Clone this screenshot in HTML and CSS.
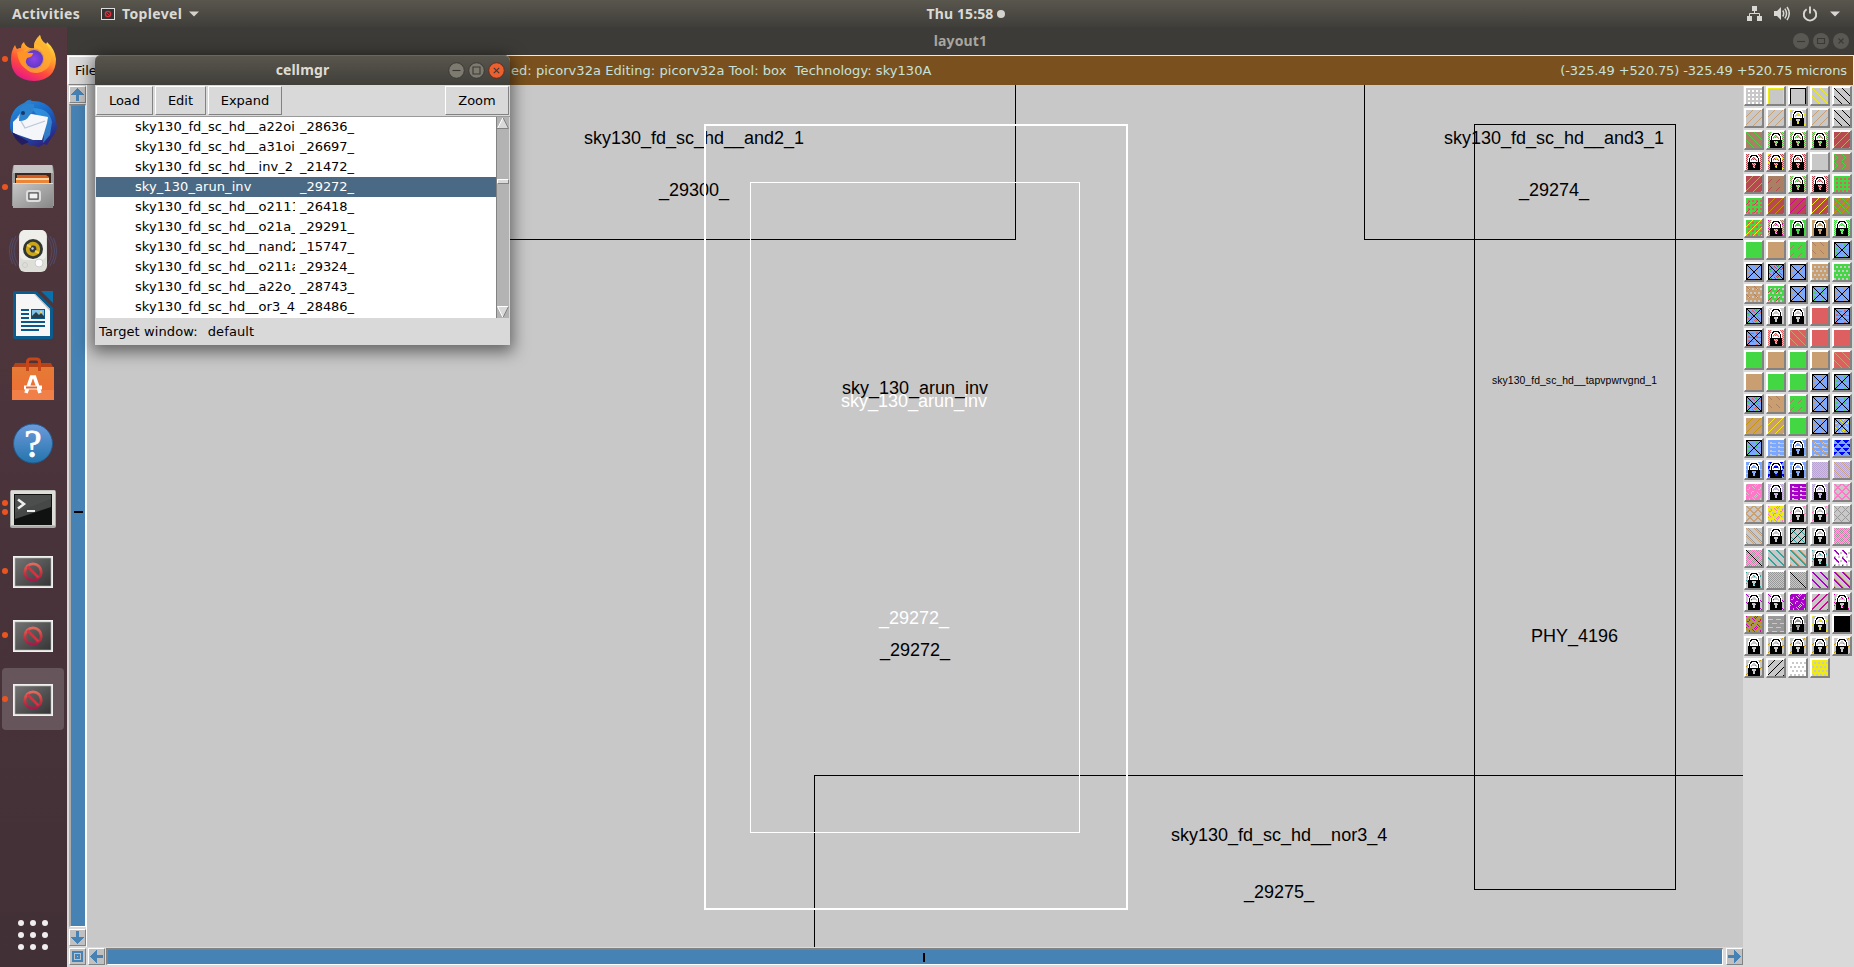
FILE: index.html
```html
<!DOCTYPE html>
<html lang="en">
<head>
<meta charset="utf-8">
<title>layout1</title>
<link rel="stylesheet" href="styles.css">
</head>
<body>
<header class="topbar">
  <div class="topbar-left">
    <span class="activities">Activities</span>
    <svg class="app-icon" width="14" height="12" viewBox="0 0 14 12"><rect x=".5" y=".5" width="13" height="11" fill="#333" stroke="#ddd"/><circle cx="7" cy="6" r="2.6" fill="none" stroke="#d8323c" stroke-width="1.4"/><path d="M5.3 4.3l3.4 3.4" stroke="#d8323c"/></svg>
    <span class="app-name">Toplevel</span>
    <svg class="caret" width="10" height="6" viewBox="0 0 10 6"><path d="M0 .5h10L5 5.5z" fill="#d3d2cd"/></svg>
  </div>
  <div class="clock">Thu 15:58<i class="dot"></i></div>
  <div class="tray">
    <svg width="15" height="15" viewBox="0 0 15 15" fill="#d8d7d3"><path d="M5 0h5v5H5zM0 10h5v5H0zM10 10h5v5h-5z"/><path d="M7.5 5v2.500M2.500 10V7.500h10V10" fill="none" stroke="#d8d7d3"/></svg>
    <svg width="16" height="15" viewBox="0 0 16 15"><path d="M0 5h3l4-4v13l-4-4H0z" fill="#d8d7d3"/><path d="M8.700 4.500q2 3 0 6M10.800 2.600q3.500 4.900 0 9.800M13 1q4.500 6.500 0 13" fill="none" stroke="#d8d7d3" stroke-width="1.500"/></svg>
    <svg width="16" height="16" viewBox="0 0 16 16"><path d="M4.600 3.200a6.200 6.200 0 1 0 6.800 0M8 .5v7" fill="none" stroke="#d8d7d3" stroke-width="1.900"/></svg>
    <svg width="10" height="6" viewBox="0 0 10 6"><path d="M0 .5h10L5 5.500z" fill="#d8d7d3"/></svg>
  </div>
</header>

<div class="desktop">
  <nav class="dock">
    <div class="launcher"><span class="pips"><i></i></span>
      <svg width="48" height="48" viewBox="0 0 48 48">
        <defs>
          <linearGradient id="ff1" x1=".8" y1="0" x2=".3" y2="1"><stop offset="0" stop-color="#fff14a"/><stop offset=".4" stop-color="#ffa22b"/><stop offset=".7" stop-color="#ff4a3d"/><stop offset="1" stop-color="#e8158a"/></linearGradient>
          <radialGradient id="ff2"><stop offset="0" stop-color="#8e45e8"/><stop offset="1" stop-color="#6038c8"/></radialGradient>
        </defs>
        <path d="M6 10q1 3 2 4 2-1 4-1 0-4 3-6 1 4 6 6l4 1Q24 6 31 0q1 6 6 9 1-1 1-2 8 7 9 17Q47 45 25 46 2 45 2 24 2 16 6 10z" fill="url(#ff1)"/>
        <circle cx="24.500" cy="24" r="10.500" fill="url(#ff2)"/>
        <path d="M24 13q9-1 12 6-2-8-11-10 3-6 6-9 1 6 6 9 6 7 5 17-2 10-14 12-14 0-14-14l7 2q2-1 3-3h-6q-3-3-8-3 2-5 14-7z" fill="#ffad30" opacity=".75"/>
        <circle cx="25" cy="24" r="9" fill="url(#ff2)"/>
        <path d="M8 17q6-3 11 1h5q0 4-6 5-4 7 3 12-11-2-13-18z" fill="#ff9328"/>
      </svg></div>
    <div class="launcher">
      <svg width="48" height="48" viewBox="0 0 48 48">
        <defs><linearGradient id="tb" x1="0" y1="0" x2=".6" y2="1"><stop offset="0" stop-color="#2f91d8"/><stop offset=".5" stop-color="#1968c8"/><stop offset="1" stop-color="#2b2580"/></linearGradient></defs>
        <path d="M15 4q4-4 8-3l-2 1q15-1 22 9 4 7 5 18l-3 7-2 2-5 8-3-1-5 3-9-2Q4 42 1 29 0 10 15 4z" fill="url(#tb)"/>
        <path d="M22 9q18-1 21 14l-2 13-7 8q4-19-12-35z" fill="#3ba0e4" opacity=".65"/>
        <path d="M4 23q5-4 8-10l27 5-1 6-5 17-9 0L4 34z" fill="#f4f6fa"/>
        <path d="M9 17l7 12 20-7" fill="none" stroke="#bec6d6" stroke-width="1.300"/>
        <path d="M3 33l9 5 8 5-7 3Q5 40 3 33z" fill="#251d62"/>
        <path d="M11 10q4-7 14-5 1 7-5 12-2 5-10 5z" fill="#2d83ce"/><circle cx="14" cy="14" r="2" fill="#123968"/>
      </svg></div>
    <div class="launcher"><span class="pips"><i></i></span>
      <svg width="48" height="48" viewBox="0 0 48 48">
        <defs><linearGradient id="fl" x1="0" y1="0" x2="1" y2="1"><stop offset="0" stop-color="#c6c6c6"/><stop offset="1" stop-color="#878787"/></linearGradient></defs>
        <path d="M4 3q0-1 2-1h36q2 0 2 1l1 7v33H3V10z" fill="#989898"/><path d="M5 2h38l1 8H4z" fill="#c4c4c4"/>
        <path d="M6 10h36v12H6z" fill="#3a2720"/><path d="M8 12h29l3 2v6H8z" fill="#d75c22"/><path d="M7 15h33v2H7z" fill="#f3d4a0"/><path d="M7 17h33v3H7z" fill="#ed8538"/>
        <path d="M4 20h40v25H4z" fill="url(#fl)"/><path d="M4 20h40v1H4z" fill="#ddd"/>
        <rect x="18" y="28" width="13" height="10" rx="2" fill="none" stroke="#ddd" stroke-width="2"/><rect x="20" y="30" width="9" height="6" fill="#f2f2f2" stroke="#454545"/>
      </svg></div>
    <div class="launcher">
      <svg width="48" height="48" viewBox="0 0 48 48">
        <g fill="none" stroke="#51567c" opacity=".7"><path d="M7 9q-9 15 0 30M3.500 11q-6 13 0 26M10 9q-10 15 0 30M41 9q9 15 0 30M44.500 11q6 13 0 26M38 9q10 15 0 30"/></g>
        <rect x="10" y="3" width="28" height="42" rx="6" fill="#deded9"/><rect x="11" y="3" width="26" height="30" rx="5" fill="#eeeeea"/>
        <circle cx="24" cy="22" r="10" fill="#323632"/><circle cx="24" cy="22" r="7.200" fill="#cca616"/><circle cx="24" cy="22" r="3.400" fill="#333842"/><circle cx="23.500" cy="21.500" r="1.200" fill="#c9d4dd"/><path d="M18 18l4 2M30 26l-4-2" stroke="#f1d14a" stroke-width="2"/>
        <circle cx="30" cy="36" r="4" fill="#fafafa" stroke="#ccc"/><circle cx="16" cy="38" r="2.500" fill="none" stroke="#ccc"/>
      </svg></div>
    <div class="launcher">
      <svg width="48" height="48" viewBox="0 0 48 48">
        <path d="M6 0h21l17 17v29q0 2-2 2H6q-2 0-2-2V2q0-2 2-2z" fill="#0a5c8e"/><path d="M32 0h12v12z" fill="#0870aa"/>
        <path d="M7 3h19l15 15v27H7z" fill="#f6f6f6"/>
        <path d="M26 3l15 15v2L25 3z" fill="#bbb"/>
        <g fill="#0b568a"><path d="M12 18h8v2h-8zM12 22h8v2h-8zM12 26h8v2h-8zM12 30h24v2H12zM12 34h24v2H12zM12 38h18v2H12z"/></g>
        <rect x="22.500" y="18.500" width="13" height="9" fill="#82c2e8" stroke="#0b568a"/><path d="M23 27v-2l4-4 3 3 2-2 3 3v2z" fill="#27404c"/><circle cx="32" cy="21" r="1.300" fill="#f5cb52"/>
      </svg></div>
    <div class="launcher">
      <svg width="48" height="48" viewBox="0 0 48 48">
        <defs><linearGradient id="sw" x1="0" y1="0" x2="0" y2="1"><stop offset="0" stop-color="#e57b36"/><stop offset="1" stop-color="#f06c34"/></linearGradient></defs>
        <path d="M6 8h36l3 6H3z" fill="#b54217"/><path d="M3 12h42v33H3z" fill="url(#sw)"/><path d="M3 35h42v10H3z" fill="#f18048"/>
        <path d="M18.500 16V7q0-3 3-3h6q3 0 3 3v9" fill="none" stroke="#c74618" stroke-width="3"/>
        <path d="M17 38l5.500-16h3L31 38" fill="none" stroke="#fff" stroke-width="3.600"/><path d="M15 32.500h18" stroke="#fff" stroke-width="4"/><path d="M17 32.500h11" stroke="#e7642d" stroke-width="2"/>
      </svg></div>
    <div class="launcher">
      <svg width="48" height="48" viewBox="0 0 48 48">
        <defs><linearGradient id="hp" x1="0" y1="0" x2="0" y2="1"><stop offset="0" stop-color="#6d9bdc"/><stop offset="1" stop-color="#2474ac"/></linearGradient></defs>
        <circle cx="24" cy="24.500" r="19.500" fill="url(#hp)" stroke="#235d91"/>
        <text class="help-mark" x="24" y="38" text-anchor="middle">?</text>
      </svg></div>
    <div class="launcher"><span class="pips"><i></i><i></i></span>
      <svg width="48" height="48" viewBox="0 0 48 48">
        <rect x="1" y="7" width="46" height="38" rx="2" fill="#a9a9a7"/><rect x="2" y="7.500" width="44" height="35" fill="#deded9"/><rect x="5" y="11" width="38" height="31" fill="#101211"/><path d="M6 12h36v12L6 36z" fill="#454847"/><path d="M6 12h36v4L6 30z" fill="#515453" opacity=".5"/>
        <path d="M9 16.500l6 4.500-6 4.500" fill="none" stroke="#eee" stroke-width="2.500"/><path d="M18 28h8" stroke="#eee" stroke-width="2"/>
      </svg></div>
    <div class="launcher"><span class="pips"><i></i></span><svg width="48" height="48" viewBox="0 0 48 48"><use href="#generic"/></svg></div>
    <div class="launcher"><span class="pips"><i></i></span><svg width="48" height="48" viewBox="0 0 48 48"><use href="#generic"/></svg></div>
    <div class="launcher active"><span class="pips"><i></i></span>
      <svg width="48" height="48" viewBox="0 0 48 48">
        <defs>
          <linearGradient id="gw" x1="0" y1="0" x2="1" y2="1"><stop offset="0" stop-color="#737373"/><stop offset="1" stop-color="#353535"/></linearGradient>
          <linearGradient id="gr" x1="0" y1="0" x2="0" y2="1"><stop offset="0" stop-color="#e6685d"/><stop offset=".6" stop-color="#c9303d"/><stop offset="1" stop-color="#a01c4b"/></linearGradient>
          <g id="generic"><rect x="4" y="9" width="40" height="32" fill="#f0f0ee"/><rect x="6" y="11" width="36" height="28" fill="url(#gw)" stroke="#aaa" stroke-width=".6"/><circle cx="24" cy="25" r="8.200" fill="none" stroke="url(#gr)" stroke-width="2.800"/><path d="M18.500 19.500l11 11" stroke="#cd3542" stroke-width="2.800"/></g>
        </defs>
        <use href="#generic"/>
      </svg></div>
    <div class="apps-button">
      <i></i><i></i><i></i><i></i><i></i><i></i><i></i><i></i><i></i>
    </div>
  </nav>

  <main class="window">
    <div class="titlebar">
      <span class="title">layout1</span>
      <div class="window-buttons dim">
        <svg width="16" height="16" viewBox="0 0 16 16"><circle cx="8" cy="8" r="8"/><path d="M4 8.500h8"/></svg>
        <svg width="16" height="16" viewBox="0 0 16 16"><circle cx="8" cy="8" r="8"/><path d="M4.500 5.500h7v5h-7z"/></svg>
        <svg width="16" height="16" viewBox="0 0 16 16"><circle cx="8" cy="8" r="8"/><path d="M5.500 5.500l5 5M10.500 5.500l-5 5"/></svg>
      </div>
    </div>
    <div class="menubar">
      <div class="menu">File</div>
      <div class="status-strip"><span class="status">ed: picorv32a Editing: picorv32a Tool: box&nbsp; Technology: sky130A</span><span class="coords">(-325.49 +520.75) -325.49 +520.75 microns</span></div>
    </div>
    <div class="work">
      <div class="vscroll">
        <div class="arrow"><svg width="15" height="15" viewBox="0 0 15 15"><path d="M7.500 1L14 8H9v6H6V8H1z"/></svg></div>
        <div class="vtrough"><i></i></div>
        <div class="arrow"><svg width="15" height="15" viewBox="0 0 15 15"><path d="M7.500 14L14 7H9V1H6v6H1z"/></svg></div>
      </div>
      <svg class="canvas" width="1656" height="862" viewBox="87 85 1656 862">
        <g class="cell-box">
          <path d="M500 239.500H1015.500V85"/>
          <path d="M1364.500 85V239.500H1743"/>
          <path d="M1743 775.500H814.500V947"/>
          <rect x="1474.500" y="124.500" width="201" height="765"/>
        </g>
        <g class="label">
          <text x="584" y="144" textLength="220">sky130_fd_sc_hd__and2_1</text>
          <text x="659" y="196">_29300_</text>
          <text x="1444" y="144" textLength="220">sky130_fd_sc_hd__and3_1</text>
          <text x="1519" y="196">_29274_</text>
          <text x="842" y="394">sky_130_arun_inv</text>
          <text x="880" y="656">_29272_</text>
          <text x="1531" y="642">PHY_4196</text>
          <text x="1171" y="841">sky130_fd_sc_hd__nor3_4</text>
          <text x="1244" y="898">_29275_</text>
          <text class="small" x="1492" y="384" textLength="165">sky130_fd_sc_hd__tapvpwrvgnd_1</text>
        </g>
        <g class="label selected">
          <text x="841" y="407">sky_130_arun_inv</text>
          <text x="879" y="624">_29272_</text>
        </g>
        <rect class="selection" x="750.500" y="182.500" width="329" height="650"/>
        <rect class="cursor-box" x="705" y="125" width="422" height="784"/>
      </svg>
      <div class="corner"><div class="arrow"><svg width="15" height="15" viewBox="0 0 15 15"><path fill-rule="evenodd" d="M2 2h11v11H2zM4 4v7h7V4zM5 5h5v5H5zM7 7v1h1V7z"/></svg></div></div>
      <div class="hscroll">
        <div class="arrow"><svg width="15" height="15" viewBox="0 0 15 15"><path d="M1 7.500L8 1v5h6v3H8v5z"/></svg></div>
        <div class="htrough"><i></i></div>
        <div class="arrow"><svg width="15" height="15" viewBox="0 0 15 15"><path d="M14 7.500L7 1v5H1v3h6v5z"/></svg></div>
      </div>
      <aside class="palette" id="palette"></aside>
    </div>
  </main>
</div>

<section class="cellmgr">
  <div class="cm-titlebar">
    <span class="title">cellmgr</span>
    <div class="window-buttons">
      <svg width="17" height="17" viewBox="0 0 17 17"><circle cx="8.500" cy="8.500" r="7.800"/><path d="M4.500 8.500h8"/></svg>
      <svg width="17" height="17" viewBox="0 0 17 17"><circle cx="8.500" cy="8.500" r="7.800"/><path d="M5 5h7v7H5z"/></svg>
      <svg class="close" width="17" height="17" viewBox="0 0 17 17"><circle cx="8.500" cy="8.500" r="7.800"/><path d="M5.800 5.800l5.400 5.400M11.200 5.800l-5.400 5.400"/></svg>
    </div>
  </div>
  <div class="cm-toolbar">
    <button class="load">Load</button><button class="edit">Edit</button><button class="expand">Expand</button><button class="zoom">Zoom</button>
  </div>
  <div class="cm-body">
    <ul class="tree">
      <li><span>sky130_fd_sc_hd__a22oi</span><b>_28636_</b></li>
      <li><span>sky130_fd_sc_hd__a31oi</span><b>_26697_</b></li>
      <li><span>sky130_fd_sc_hd__inv_2</span><b>_21472_</b></li>
      <li class="current"><span>sky_130_arun_inv</span><b>_29272_</b></li>
      <li><span>sky130_fd_sc_hd__o2111</span><b>_26418_</b></li>
      <li><span>sky130_fd_sc_hd__o21a_</span><b>_29291_</b></li>
      <li><span>sky130_fd_sc_hd__nand2</span><b>_15747_</b></li>
      <li><span>sky130_fd_sc_hd__o211a</span><b>_29324_</b></li>
      <li><span>sky130_fd_sc_hd__a22o_</span><b>_28743_</b></li>
      <li><span>sky130_fd_sc_hd__or3_4</span><b>_28486_</b></li>
    </ul>
    <div class="cm-scroll">
      <svg width="12" height="12" viewBox="0 0 12 12"><path d="M6 .5L11.500 11.500H.5z" fill="#d9d9d9"/><path d="M.5 11.500L6 .5" stroke="#fff"/><path d="M6 .5l5.500 11H0" fill="none" stroke="#828282"/></svg>
      <i class="thumb"></i>
      <svg width="12" height="12" viewBox="0 0 12 12"><path d="M6 11.500L11.500.5H.5z" fill="#d9d9d9"/><path d="M11.500.5H.5l5.500 11" fill="none" stroke="#fff"/><path d="M6 11.500l5.500-11" stroke="#828282"/></svg>
    </div>
  </div>
  <div class="cm-status"><span>Target window:</span><span>default</span></div>
</section>
<script src="palette.js"></script>
</body>
</html>
```
FILE: styles.css
```css
* { box-sizing: border-box; }
body {
  margin: 0;
  width: 1854px;
  height: 967px;
  overflow: hidden;
  display: flex;
  flex-direction: column;
  background: #3c3b37;
  font: 13px "DejaVu Sans", sans-serif;
  color: #000;
}
svg { display: block; flex: none; }

/* top panel */
.topbar {
  height: 27px;
  flex: none;
  display: grid;
  grid-template-columns: 1fr auto 1fr;
  align-items: center;
  background: linear-gradient(#59564d, #3f3e3a);
  font: bold 14px/26px "Noto Sans", sans-serif;
  color: #dad9d4;
}
.topbar-left { display: flex; align-items: center; padding-left: 12px; }
.activities { width: 89px; letter-spacing: .3px; }
.app-name { margin-left: 7px; width: 62px; letter-spacing: .35px; }
.caret { margin-left: 5px; }
.clock { display: flex; align-items: center; padding-left: 78px; letter-spacing: .1px; }
.dot { width: 8px; height: 8px; margin-left: 4px; border-radius: 50%; background: #d3d2cd; }
.tray { display: flex; align-items: center; justify-content: flex-end; gap: 13px; padding-right: 15px; }
.tray svg:last-child { margin-right: 0; }
.tray { padding-right: 14px; gap: 12px; }

.desktop { flex: 1; display: flex; min-height: 0; }

/* dock */
.dock {
  width: 67px;
  flex: none;
  display: flex;
  flex-direction: column;
  gap: 2px;
  padding: 1px 3px 17px 2px;
  background: linear-gradient(#52373e, #423037);
}
.launcher {
  position: relative;
  height: 62px;
  display: grid;
  place-items: center;
}
.launcher.active { background: #66565c; border-radius: 4px; }
.pips {
  position: absolute;
  left: 0;
  top: 0;
  height: 62px;
  display: flex;
  flex-direction: column;
  justify-content: center;
  gap: 3px;
}
.pips i { width: 6px; height: 6px; border-radius: 50%; background: #e95420; }
.help-mark { font: 39px "Liberation Serif", serif; fill: #fff; stroke: #fff; stroke-width: .8px; }
.apps-button {
  margin: auto auto 0;
  display: grid;
  grid-template-columns: repeat(3, 6px);
  gap: 6px;
}
.apps-button i { height: 6px; border-radius: 50%; background: #efeded; }

/* layout window */
.window { flex: 1; display: flex; flex-direction: column; min-width: 0; background: #d9d9d9; }
.titlebar {
  height: 28px;
  flex: none;
  display: flex;
  align-items: center;
  justify-content: center;
  position: relative;
  background: #3c3b37;
  color: #a9a69e;
}
.title { font: bold 14px/28px "Noto Sans", sans-serif; letter-spacing: .15px; }
.window-buttons { position: absolute; right: 5px; display: flex; gap: 4px; }
.window-buttons circle { fill: #7d7a70; stroke: #3a3935; stroke-width: 1; }
.window-buttons path { fill: none; stroke: #3a3935; stroke-width: 1.1; }
.window-buttons .close circle { fill: #ec5f2f; stroke: #682c17; }
.window-buttons.dim circle { fill: #5a5852; stroke: none; }
.menubar {
  height: 30px;
  flex: none;
  display: flex;
  padding: 1px 1px 0 1px;
  background: #ececec;
}
.menu {
  width: 40px;
  line-height: 27px;
  padding-left: 6px;
  background: #d9d9d9;
  border: 1px solid;
  border-color: #fff #828282 #828282 #fff;
}
.status-strip {
  flex: 1;
  display: flex;
  justify-content: space-between;
  padding: 0 6px 0 403px;
  line-height: 29px;
  background: #7a511e;
  color: #c5e2dd;
}
.status { letter-spacing: .055px; }
.coords { letter-spacing: -.11px; }
.work {
  flex: 1;
  display: grid;
  grid-template-columns: 20px 1656px 111px;
  grid-template-rows: 862px 20px;
}
.vscroll { grid-column: 1; grid-row: 1; }
.corner { grid-column: 1; grid-row: 2; }
.canvas { grid-column: 2; grid-row: 1; background: #c8c8c8; }
.hscroll { grid-column: 2; grid-row: 2; }
.cell-box { fill: none; stroke: #000; shape-rendering: crispEdges; }
.label { font: 18px "Liberation Sans", sans-serif; fill: #000; }
.label .small { font-size: 10.4px; }
.label.selected { fill: #fff; }
.selection { fill: none; stroke: #fff; shape-rendering: crispEdges; }
.cursor-box { fill: none; stroke: #fff; stroke-width: 2; shape-rendering: crispEdges; }

.arrow {
  width: 17px;
  height: 17px;
  flex: none;
  background: #c0c0c0;
  border: 1px solid;
  border-color: #fff #828282 #828282 #fff;
}
.arrow path { fill: #4682b4; shape-rendering: crispEdges; }
.vscroll {
  display: flex;
  flex-direction: column;
  align-items: flex-start;
  gap: 1px;
  padding: 1px 0 1px 2px;
  border-right: 1px solid #fff;
}
.vtrough, .htrough {
  display: grid;
  place-items: center;
  background: #4682b4;
  border: solid;
  border-width: 2px 1px 1px 2px;
  border-color: #828282 #fff #fff #828282;
}
.vtrough { flex: 1; width: 17px; margin-bottom: 1px; padding-bottom: 8px; border-left-color: #aaa; }
.vtrough i { width: 9px; height: 2px; background: #000; }
.corner { padding: 1px 0 0 2px; }
.hscroll { display: flex; gap: 1px; padding: 1px 0 0 1px; }
.htrough { flex: 1; height: 17px; margin-right: 2px; padding-left: 17px; }
.htrough i { width: 2px; height: 9px; background: #000; }

/* layer palette */
.palette {
  grid-column: 3;
  grid-row: 1 / 3;
  display: grid;
  grid-template-columns: repeat(5, 20px);
  grid-auto-rows: 20px;
  gap: 2px;
  padding: 1px;
  align-content: start;
  background: #d9d9d9;
}
.layer {
  border: solid;
  border-width: 1px 2px 2px 1px;
  border-color: #fff #828282 #828282 #fff;
  padding: 1px 0 0 1px;
  background: #fff;
}

/* floating cell manager */
.cellmgr {
  position: absolute;
  left: 95px;
  top: 55px;
  width: 415px;
  height: 290px;
  display: flex;
  flex-direction: column;
  border-radius: 6px 6px 0 0;
  background: #d9d9d9;
  box-shadow: 0 4px 16px 3px rgba(0, 0, 0, .5);
}
.cm-titlebar {
  height: 30px;
  display: flex;
  align-items: center;
  justify-content: center;
  position: relative;
  border-radius: 6px 6px 0 0;
  background: linear-gradient(#59564d, #403f3a);
  box-shadow: inset 0 1px #6a675e;
  color: #dfdbd2;
}
.cm-titlebar .window-buttons { gap: 3px; right: 5.500px; }
.cm-toolbar { height: 32px; display: flex; gap: 2px; padding: 1px; border-bottom: 1px solid #9a9a9a; }
.cm-toolbar button {
  height: 29px;
  padding: 0;
  font: inherit;
  background: #d9d9d9;
  border: 1px solid;
  border-color: #fff #828282 #828282 #fff;
}
.load { width: 57px; }
.edit { width: 51px; }
.expand { width: 74px; }
.zoom { width: 64px; margin-left: auto; }
.cm-body { display: flex; height: 201px; padding: 0 1px; }
.tree { list-style: none; margin: 0; padding: 0; width: 400px; background: #fff; }
.tree li { display: flex; height: 20px; line-height: 20px; padding-left: 39px; }
.tree span { width: 160px; overflow: hidden; white-space: nowrap; letter-spacing: .08px; }
.tree b { font-weight: normal; margin-left: 5px; letter-spacing: -.05px; }
.tree .current { background: #4a6984; color: #fff; }
.cm-scroll {
  width: 13px;
  display: flex;
  flex-direction: column;
  background: #b3b3b3;
  border-left: 1px solid #828282;
}
.thumb { height: 5px; margin: 50px 0 auto; background: #d9d9d9; border: 1px solid; border-color: #fff #828282 #828282 #fff; }
.cm-status { display: flex; gap: 10px; padding-left: 4px; line-height: 27px; letter-spacing: .1px; }
```
FILE: palette.js
```js
// Colours used by the technology's display styles.
const COLORS = {
  G: '#43d843', T: '#c99e70', R: '#b84952', S: '#dd5f5f', B: '#7ba7ff', N: '#c8c8c8',
  W: '#ffffff', K: '#000000', Y: '#f0ec10', P: '#ff78c8', V: '#a800c8', D: '#989898',
  M: '#aa8064', O: '#c49600', C: '#2ca69c', E: '#0000ff', L: '#b9a4d4', A: '#d80098'
};

// Stipples: each tells whether the pixel (x, y) of a 16x16 swatch is set.
const STIPPLES = {
  f: () => true,
  '/': (x, y) => (x + y) % 8 === 6 && x + y > 4,
  '\\': (x, y) => (x - y + 32) % 8 === 0,
  '-': (x, y) => (x + y) % 8 === 6 && (x % 8) < 4,
  '_': (x, y) => (x - y + 32) % 8 === 0 && (x % 8) < 4,
  c: (x, y) => (x + y) % 2 === 0,
  k: (x, y) => x % 2 === 0 && y % 2 === 0 && (x + y) % 4 === 2,
  d: (x, y) => x % 4 > 1 && y % 4 > 1,
  g: (x, y) => !((x + (y >> 2 & 1) * 2) % 4 > 1 && y % 4 > 1),
  w: (x, y) => y % 4 === 3 && (x + y * 2) % 8 < 6 || y % 4 === 2 && (x + y * 2) % 8 > 5,
  h: (x, y) => y % 4 !== 3 || (x + y) % 8 < 3,
  x: (x, y) => (x + y) % 8 === 6 || (x - y + 32) % 8 === 0,
  X: (x, y) => [6, 7].includes((x + y) % 8) || [0, 1].includes((x - y + 32) % 8),
  B: (x, y) => [0, 1].includes((x - y + 32) % 8),
  b: (x, y) => (x - y + 32) % 8 === 2,
  v: (x, y) => [0, 1].includes((x - y + 32) % 8) && x % 8 < 5,
  F: (x, y) => [6, 7].includes((x + y) % 8),
  p: (x, y) => (x * 5 + y * 7 + x * y) % 11 < 2,
  m: (x, y) => y % 8 < 4 ? (x + 4) % 8 >= 3 - y % 4 && (x + 4) % 8 <= 4 + y % 4 : x % 8 >= 3 - y % 4 && x % 8 <= 4 + y % 4,
  u: (x, y) => y === 0 || x === 0 || x === 15,
  o: (x, y) => y === 0 || y === 15 || x === 0 || x === 15,
  z: (x, y) => y === 0 || y === 15 || x === 0 || x === 15 || x === y || x + y === 15,
  l: (x, y) => x === y
};

const LOCK = [
  '....WWWWWWWW....',
  '...WWKKKKKKWW...',
  '...WKKWWWWKKW...',
  '..WWKWW..WWKWW..',
  '..WKWW....WWKW..',
  '..WKW......WKW..',
  '..WKW.WWWW.WKW..',
  '..WKWWWWWWWWKW..',
  '..KKKKKKKKKKKK..',
  '..KKKK....KKKK..',
  '..KKKK....KKKK..',
  '..KKKKK..KKKKK..',
  '..KKKKK..KKKKK..',
  '..KKKKK..KKKKK..',
  '..KKKKKKKKKKKK..',
  '..KKKKKKKKKKKK..'
];

// One row per line; a swatch is a list of colour + stipple pairs, "#" adds the lock.
const LAYERS = String.raw`
Wd Yu Ku Y\ K\
T/ T/ Yp# T/ K\
MfG\ McGk# McGk# McGk# RfT/
Rc# RcYp# Rc# Nf MfG_G-
RfT/ MfR- McGk# Rc# GfSd
GfSdR- RfO/ RfA/ RfY/ MfG\O/
GfSdY/ McAp# Gf# Tf# Gc#
Gf Tf GfM- TfM_ BfGwKz
BfTwKz BfGwRpKz BfTwKz Tg Gg
TgM_ GgR- BfTwKz BfGwKz BfTwKz
BfGwSpKz W_# Nf# Sf BfSwKz
BfSwKz Sc# SfT\ Sf Sf
Gf Tf Gf Tf SfT\
Tf Gf Gf BfTwKz BfGwKz
BfGwSpKz TfM_ GfM- BfTwKz BfGwKz
TfO/ TfY/ Gf BfTwKz BfTwYpKz
BfGwKz BfNw Bh# BfNwT\ EfBm
Bh# EfBm# Bh# Lc LcT\
PfNp Lc# VfNw Lc# PX
PXTx YgPp P/# P/# Dx
T\Db Nf# C\C/K/Ko Nf# DcPx
DcPxKl CB CBTb Cp# WgVv
Cp# Dc DcKl VB VBTb
V\# V\# VfNp AF Ap#
OfDkAp Dh Dh# Yp# Kf
Nf# O/# O/# O/# O/#
O/# K/ Wg Yg`.trim().split('\n').map(row => row.split(' '));

function pixelColor(spec, x, y) {
  let color = 'N';
  const pairs = spec.replace('#', '');
  for (let i = 0; i < pairs.length; i += 2) {
    if (STIPPLES[pairs[i + 1]](x, y)) color = pairs[i];
  }
  if (spec.endsWith('#') && LOCK[y][x] !== '.') color = LOCK[y][x];
  return color;
}

function swatch(spec) {
  const paths = {};
  for (let y = 0; y < 16; y++) {
    for (let x = 0; x < 16; x++) {
      const c = pixelColor(spec, x, y);
      paths[c] = (paths[c] || '') + `M${x} ${y}h1v1h-1z`;
    }
  }
  const body = Object.entries(paths).map(([c, d]) => `<path fill="${COLORS[c]}" d="${d}"/>`).join('');
  return `<div class="layer"><svg width="16" height="16" viewBox="0 0 16 16" shape-rendering="crispEdges">${body}</svg></div>`;
}

document.getElementById('palette').innerHTML = LAYERS.flat().map(swatch).join('');
```
